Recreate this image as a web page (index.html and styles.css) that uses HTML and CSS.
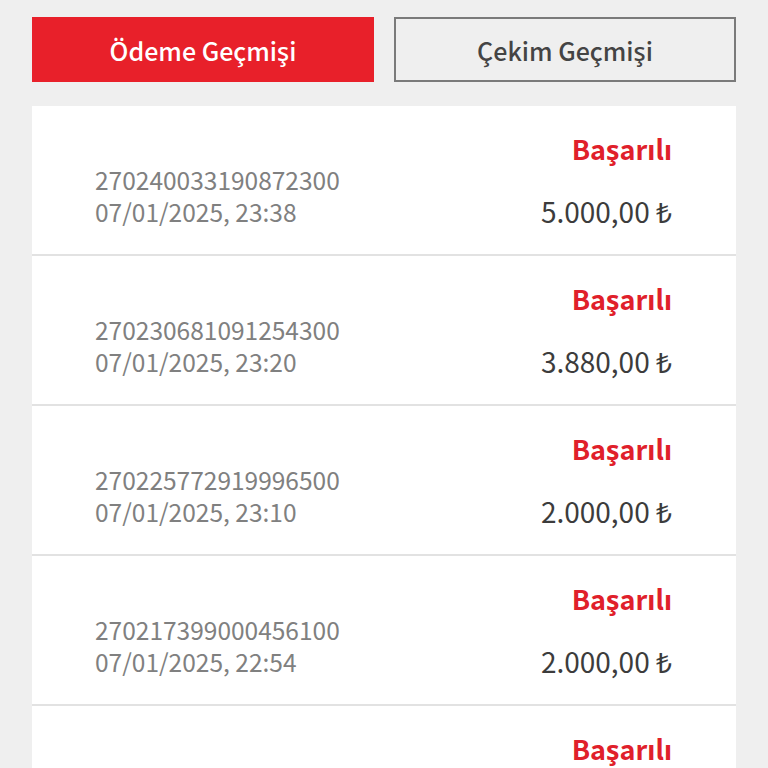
FILE: index.html
```html
<!DOCTYPE html>
<html lang="tr">
<head>
    <meta charset="UTF-8">
    <meta name="viewport" content="width=device-width, initial-scale=1.0">
    <title>Ödeme Geçmişi</title>
    <link rel="stylesheet" href="styles.css">
</head>
<body>
    <div class="page">
        <div class="tabs">
            <button class="tab active">Ödeme Geçmişi</button>
            <button class="tab">Çekim Geçmişi</button>
        </div>
        <div class="list">
            <div class="row">
                <div class="info">
                    <div>270240033190872300</div>
                    <div>07/01/2025, 23:38</div>
                </div>
                <div class="side">
                    <div class="status">Başarılı</div>
                    <div class="amount">5.000,00 ₺</div>
                </div>
            </div>
            <div class="row">
                <div class="info">
                    <div>270230681091254300</div>
                    <div>07/01/2025, 23:20</div>
                </div>
                <div class="side">
                    <div class="status">Başarılı</div>
                    <div class="amount">3.880,00 ₺</div>
                </div>
            </div>
            <div class="row">
                <div class="info">
                    <div>270225772919996500</div>
                    <div>07/01/2025, 23:10</div>
                </div>
                <div class="side">
                    <div class="status">Başarılı</div>
                    <div class="amount">2.000,00 ₺</div>
                </div>
            </div>
            <div class="row">
                <div class="info">
                    <div>270217399000456100</div>
                    <div>07/01/2025, 22:54</div>
                </div>
                <div class="side">
                    <div class="status">Başarılı</div>
                    <div class="amount">2.000,00 ₺</div>
                </div>
            </div>
            <div class="row">
                <div class="info">
                    <div>270210055412873200</div>
                    <div>07/01/2025, 22:41</div>
                </div>
                <div class="side">
                    <div class="status">Başarılı</div>
                    <div class="amount">1.500,00 ₺</div>
                </div>
            </div>
        </div>
    </div>
</body>
</html>
```

FILE: styles.css
```css
body {
    font-family: "Noto Sans CJK SC", "Noto Sans", sans-serif;
    background-color: #efefef;
    margin: 0;
    padding: 0;
    height: 768px;
    overflow: hidden;
}
.page {
    padding: 17px 32px 0;
}
.tabs {
    display: flex;
    gap: 20px;
    margin-bottom: 24px;
}
.tab {
    flex: 1;
    height: 65px;
    font-family: inherit;
    font-size: 25px;
    font-weight: 500;
    color: #444;
    background-color: #efefef;
    border: 2px solid #7a7a7a;
    border-radius: 0;
    padding: 0;
}
.tab.active {
    color: white;
    background-color: #e8202a;
    border-color: #e8202a;
}
.list {
    background-color: white;
}
.row {
    display: flex;
    justify-content: space-between;
    height: 148px;
    padding: 0 64px 0 63px;
    border-bottom: 2px solid #e2e2e2;
}
.info {
    align-self: flex-end;
    padding-bottom: 26px;
    font-size: 24.5px;
    line-height: 32px;
    color: #808080;
}
.side {
    text-align: right;
    padding-top: 23px;
}
.status {
    font-size: 27px;
    font-weight: 700;
    color: #e0202a;
    line-height: 40px;
}
.amount {
    margin-top: 22px;
    font-size: 28px;
    line-height: 40px;
    color: #3c3c3c;
}
```
